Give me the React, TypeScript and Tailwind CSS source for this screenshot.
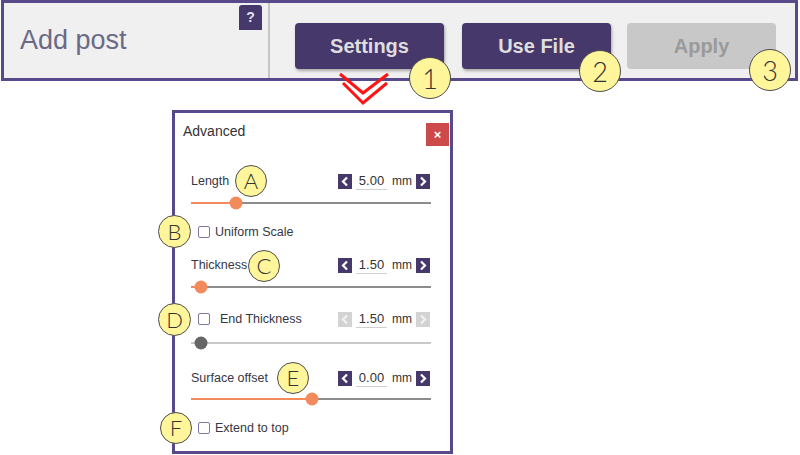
import React from "react";

const font = "font-['Liberation_Sans',Arial,sans-serif]";

function Chevron({ dir, color }: { dir: "left" | "right"; color: string }) {
  return (
    <svg width="14" height="15" viewBox="0 0 14 15">
      <polyline
        points={dir === "left" ? "9,3.5 5,7.5 9,11.5" : "5,3.5 9,7.5 5,11.5"}
        fill="none"
        stroke={color}
        strokeWidth="2.2"
      />
    </svg>
  );
}

function Spinner({ value, disabled }: { value: string; disabled?: boolean }) {
  const box = disabled ? "bg-[#d3d3d3]" : "bg-[#47386b]";
  return (
    <div className="flex items-center">
      <div className={`flex h-[15px] w-[14px] items-center justify-center ${box}`}>
        <Chevron dir="left" color={disabled ? "#f2f2f2" : "#ffffff"} />
      </div>
      <div className="ml-[4px] w-[31px] border-b border-[#d0d0d0] text-center text-[13px] leading-[16px] text-[#333]">
        {value}
      </div>
      <div className="ml-[5px] w-[17px] text-[12px] leading-[16px] text-[#333]">mm</div>
      <div className={`ml-[7px] flex h-[15px] w-[14px] items-center justify-center ${box}`}>
        <Chevron dir="right" color={disabled ? "#f2f2f2" : "#ffffff"} />
      </div>
    </div>
  );
}

function Slider({ pos, disabled }: { pos: number; disabled?: boolean }) {
  return (
    <div className={`relative h-[2px] w-full ${disabled ? "bg-[#c9c9c9]" : "bg-[#8c8c8c]"}`}>
      {!disabled && <div className="absolute left-0 top-0 h-full bg-[#f28a5c]" style={{ width: pos }} />}
      <div
        className={`absolute top-1/2 h-[13px] w-[13px] -translate-x-1/2 -translate-y-1/2 rounded-full ${
          disabled ? "bg-[#666666]" : "bg-[#f28a5c]"
        }`}
        style={{ left: pos }}
      />
    </div>
  );
}

function LabelRow({ label, value, disabled }: { label: string; value: string; disabled?: boolean }) {
  return (
    <div className="flex h-full items-center justify-between pl-[16px] pr-[20px]">
      <span className="text-[12.5px] text-[#363645]">{label}</span>
      <Spinner value={value} disabled={disabled} />
    </div>
  );
}

function Check({ label, gap }: { label: string; gap: string }) {
  return (
    <div className="flex h-full items-center pl-[23px]">
      <div className="h-[12px] w-[12px] rounded-[2px] border-[1.5px] border-[#8177a6] bg-white" />
      <span className={`${gap} text-[12.5px] text-[#363645]`}>{label}</span>
    </div>
  );
}

function Mark({ text, cls, size }: { text: string; cls: string; size: string }) {
  return (
    <div
      className={`absolute flex items-center justify-center rounded-full border border-[#4d4d4d] bg-[#fff59b] font-['Lato',sans-serif] font-light leading-none text-[#333] ${cls} ${size}`}
    >
      {text}
    </div>
  );
}

export default function App() {
  return (
    <div className={`relative h-[455px] w-[800px] overflow-hidden bg-white ${font}`}>
      {/* top toolbar */}
      <div className="ml-px flex h-[81px] w-[797px] border-[3px] border-[#584a8a] bg-[#f0f0f0]">
        <div className="flex w-[264px] justify-between">
          <div className="flex items-center pl-[16px] text-[27px] leading-none text-[#6b6a86]">Add post</div>
          <div className="mr-[6px] mt-[2px] flex h-[25px] w-[23px] items-center justify-center rounded-t-[3px] bg-[#47386b] text-[14px] font-bold text-[#dfe4f5]">
            ?
          </div>
        </div>
        <div className="w-[2px] bg-[#c6c6c6]" />
        <div className="flex items-start pl-[25px] pt-[20px]">
          <button className="flex h-[46px] w-[149px] items-center justify-center rounded-[4px] bg-[#47386b] text-[20px] font-bold text-[#dedede] shadow-[1px_2px_3px_rgba(0,0,0,0.3)]">
            Settings
          </button>
          <button className="ml-[18px] flex h-[46px] w-[149px] items-center justify-center rounded-[4px] bg-[#47386b] text-[20px] font-bold text-[#dedede] shadow-[1px_2px_3px_rgba(0,0,0,0.3)]">
            Use File
          </button>
          <button className="ml-[16px] flex h-[46px] w-[149px] items-center justify-center rounded-[4px] bg-[#c8c8c8] text-[20px] font-bold text-[#9a9a9a]">
            Apply
          </button>
        </div>
      </div>

      {/* Advanced dialog */}
      <div className="ml-[172px] mt-[29px] flex h-[344px] w-[281px] flex-col border-[3px] border-[#584a8a] bg-white">
        <div className="flex h-[53px] items-start justify-between">
          <div className="ml-[8px] mt-[9px] text-[14px] leading-[18px] text-[#333]">Advanced</div>
          <div className="mr-px mt-[10px] flex h-[23px] w-[23px] items-center justify-center bg-[#cc4a4a] text-[13px] font-bold leading-none text-white">
            ×
          </div>
        </div>
        <div className="h-[30px]">
          <LabelRow label="Length" value="5.00" />
        </div>
        <div className="flex h-[14px] items-center pl-[16px] pr-[19px]">
          <Slider pos={45} />
        </div>
        <div className="h-[44px]">
          <Check label="Uniform Scale" gap="ml-[5px]" />
        </div>
        <div className="h-[22px]">
          <LabelRow label="Thickness" value="1.50" />
        </div>
        <div className="flex h-[22px] items-center pl-[16px] pr-[19px]">
          <Slider pos={10} />
        </div>
        <div className="h-[38px] pt-[4px]">
          <div className="flex h-full items-center justify-between pr-[20px]">
            <Check label="End Thickness" gap="ml-[10px]" />
            <Spinner value="1.50" disabled />
          </div>
        </div>
        <div className="flex h-[14px] items-center pl-[16px] pr-[19px]">
          <Slider pos={10} disabled />
        </div>
        <div className="mt-[18px] h-[20px]">
          <LabelRow label="Surface offset" value="0.00" />
        </div>
        <div className="flex h-[22px] items-center pl-[16px] pr-[19px]">
          <Slider pos={121} />
        </div>
        <div className="h-[36px]">
          <Check label="Extend to top" gap="ml-[5px]" />
        </div>
      </div>

      {/* red double chevron */}
      <svg className="absolute left-[338px] top-[72px]" width="52" height="34" viewBox="0 0 52 34">
        <polyline points="2,2 25,21 50,2" fill="none" stroke="#ff1414" strokeWidth="3" />
        <polyline points="5,11 25,31 49,11" fill="none" stroke="#ff1414" strokeWidth="3" />
      </svg>

      {/* annotations */}
      <Mark text="1" cls="left-[409px] top-[57px] h-[42px] w-[42px]" size="text-[27px]" />
      <Mark text="2" cls="left-[579px] top-[50px] h-[42px] w-[42px]" size="text-[27px]" />
      <Mark text="3" cls="left-[749px] top-[49px] h-[42px] w-[42px]" size="text-[27px]" />
      <Mark text="A" cls="left-[235px] top-[165px] h-[32px] w-[32px]" size="text-[22px]" />
      <Mark text="B" cls="left-[158px] top-[215px] h-[33px] w-[33px]" size="text-[22px]" />
      <Mark text="C" cls="left-[248px] top-[250px] h-[32px] w-[32px]" size="text-[22px]" />
      <Mark text="D" cls="left-[158px] top-[303px] h-[33px] w-[33px]" size="text-[22px]" />
      <Mark text="E" cls="left-[277px] top-[362px] h-[32px] w-[32px]" size="text-[22px]" />
      <Mark text="F" cls="left-[160px] top-[412px] h-[32px] w-[32px]" size="text-[22px]" />
    </div>
  );
}
